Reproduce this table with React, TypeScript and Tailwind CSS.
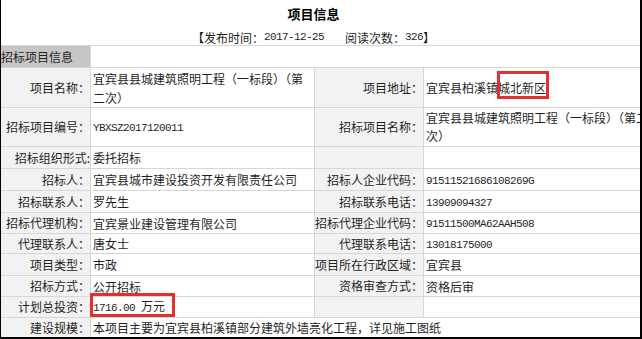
import type { ReactNode } from "react";

const mono = "font-['Liberation_Mono',monospace] text-[11px] tracking-[-0.6px]";

type RowProps = {
  h: string;
  l1: ReactNode;
  v1?: ReactNode;
  l2?: ReactNode;
  v2?: ReactNode;
  lead?: string;
  v1Extra?: ReactNode;
};

const Row = ({ h, l1, v1, l2, v2, lead = "leading-[19px]", v1Extra }: RowProps) => (
  <div className={`flex w-[652px] border-t border-[#d6d6d6] ${h}`}>
    <div className="w-[90px] shrink-0 border-r border-[#d6d6d6] bg-[#f2f2f2] flex items-center justify-end whitespace-nowrap">
      {l1}
    </div>
    <div className={`relative w-[224px] shrink-0 border-r border-[#d6d6d6] flex items-center pl-[2px] ${lead}`}>
      <div>{v1}</div>
      {v1Extra}
    </div>
    <div className="w-[109px] shrink-0 border-r border-[#d6d6d6] bg-[#f2f2f2] flex items-center justify-end whitespace-nowrap">
      {l2}
    </div>
    <div className={`w-[229px] shrink-0 flex items-center pl-[2px] ${lead}`}>
      <div>{v2}</div>
    </div>
  </div>
);

const M = ({ children }: { children: ReactNode }) => <span className={mono}>{children}</span>;

export default function App() {
  return (
    <div className="w-[642px] h-[339px] overflow-hidden bg-white border-l border-r-2 border-b-2 border-black text-[12px] text-[#1f1f1f] font-['Noto_Sans_CJK_SC',sans-serif]">
      <div className="h-[28px] flex items-center justify-center pr-[14px] font-bold text-[13px] text-black">
        项目信息
      </div>
      <div className="h-[17px] pt-[2px] flex items-center justify-center pr-[14px] whitespace-nowrap">
        <span>【发布时间：</span>
        <M>2017-12-25</M>
        <span className="ml-[21px]">阅读次数：</span>
        <M>326</M>
        <span>】</span>
      </div>

      <div className="flex w-[652px] h-[22px] border-t border-[#d6d6d6]">
        <div className="w-[90px] shrink-0 border-r border-[#d6d6d6] bg-[#c6c6c6] flex items-center whitespace-nowrap">
          招标项目信息
        </div>
      </div>

      <Row
        h="h-[40px]"
        l1="项目名称："
        v1="宜宾县县城建筑照明工程（一标段）（第二次）"
        l2="项目地址："
        v2={
          <span className="whitespace-nowrap">
            宜宾县柏溪镇
            <span className="relative inline-block leading-[19px]">
              城北新区
              <span className="absolute left-[-1px] right-[-3px] top-[-7px] bottom-[-2px] border-[3px] border-[#e0302f]" />
            </span>
          </span>
        }
      />
      <Row
        h="h-[39px]"
        lead="leading-[18px]"
        l1="招标项目编号："
        v1={<M>YBXSZ2017120011</M>}
        l2="招标项目名称："
        v2="宜宾县县城建筑照明工程（一标段）（第二次）"
      />
      <Row h="h-[22px]" l1="招标组织形式:" v1="委托招标" />
      <Row h="h-[22px]" l1="招标人：" v1="宜宾县城市建设投资开发有限责任公司" l2="招标人企业代码：" v2={<M>91511521686108269G</M>} />
      <Row h="h-[22px]" l1="招标联系人：" v1="罗先生" l2="招标联系电话：" v2={<M>13909094327</M>} />
      <Row h="h-[21px]" l1="招标代理机构：" v1="宜宾景业建设管理有限公司" l2="招标代理企业代码：" v2={<M>91511500MA62AAH508</M>} />
      <Row h="h-[20px]" l1="代理联系人：" v1="唐女士" l2="代理联系电话：" v2={<M>13018175000</M>} />
      <Row h="h-[22px]" l1="项目类型：" v1="市政" l2="项目所在行政区域：" v2="宜宾县" />
      <Row h="h-[21px]" l1="招标方式：" v1="公开招标" l2="资格审查方式：" v2="资格后审" />
      <Row
        h="h-[21px]"
        l1="计划总投资："
        v1={
          <span className="whitespace-nowrap">
            <M>{"1716.00\u00a0"}</M>万元
          </span>
        }
        v1Extra={<span className="absolute left-[-1px] top-[-4px] w-[85px] h-[24px] border-[3px] border-[#e0302f]" />}
      />

      <div className="flex w-[652px] h-[20px] border-t border-[#d6d6d6]">
        <div className="w-[90px] shrink-0 border-r border-[#d6d6d6] bg-[#f2f2f2] flex items-center justify-end whitespace-nowrap">
          建设规模：
        </div>
        <div className="flex-1 flex items-center pl-[2px] whitespace-nowrap">
          本项目主要为宜宾县柏溪镇部分建筑外墙亮化工程，详见施工图纸
        </div>
      </div>
    </div>
  );
}
